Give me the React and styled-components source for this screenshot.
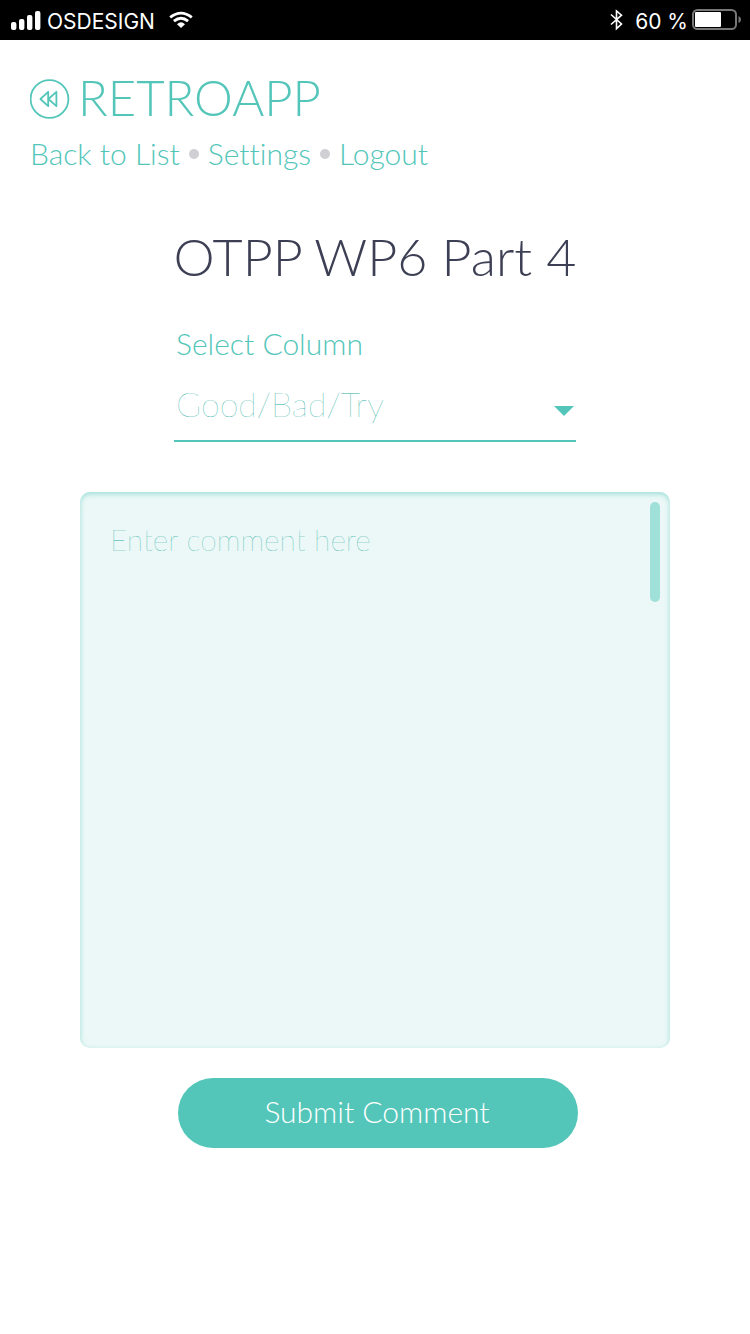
import React from "react";
import styled, { createGlobalStyle } from "styled-components";

const teal = "#53c6b9";
const deepTeal = "#2cae9f";
const ink = "#3d3f54";

const GlobalStyle = createGlobalStyle`
  *, *::before, *::after { box-sizing: border-box; }
  body {
    margin: 0;
    background: #fff;
    color: ${teal};
    font-family: Lato, "Liberation Sans", sans-serif;
    font-weight: 300;
    font-variant-ligatures: none;
  }
  button, select, textarea { font: inherit; color: inherit; }
`;

const StatusBar = styled.div`
  display: flex;
  justify-content: space-between;
  height: 40px;
  padding: 0 9px 0 11px;
  background: #000;
  color: #fff;
`;

const StatusGroup = styled.div`
  display: flex;
  align-items: center;

  svg { display: block; flex: none; }
`;

const StatusText = styled.span`
  padding: 3px ${(p) => p.$after}px 0 ${(p) => p.$before}px;
  font-family: Inter, "Liberation Sans", sans-serif;
  font-size: 21px;
  line-height: 36px;
  font-weight: 400;
`;

const Header = styled.header`
  padding: 34px 30px 0;
`;

const Brand = styled.div`
  display: flex;
  align-items: center;
  gap: 8px;
  height: 50px;

  svg { display: block; flex: none; }
`;

const BrandName = styled.span`
  padding-bottom: 4px;
  font-size: 49px;
  line-height: 46px;
`;

const Nav = styled.nav`
  display: flex;
  align-items: center;
  gap: 9px;
  height: 40px;
  margin-top: 10px;
  font-size: 30px;
  line-height: 38px;
`;

const NavLink = styled.a`
  padding-bottom: 2px;
  color: inherit;
  text-decoration: none;
`;

const Dot = styled.span`
  width: 10px;
  height: 10px;
  border-radius: 50%;
  background: #cfcfd4;
`;

const Form = styled.form`
  display: flex;
  flex-direction: column;
  align-items: center;
  padding: 0 80px 40px;
`;

const Title = styled.h1`
  margin: 50px 0 0;
  color: ${ink};
  font-size: 52px;
  line-height: 64px;
  font-weight: 300;
  white-space: nowrap;
`;

const Field = styled.div`
  width: 100%;
  max-width: 402px;
  margin-top: 35px;
`;

const Label = styled.label`
  display: block;
  padding-left: 2px;
  font-size: 30px;
  line-height: 40px;
`;

const SelectBox = styled.div`
  position: relative;
  margin-top: 8px;

  svg {
    position: absolute;
    right: 2px;
    top: 35px;
    pointer-events: none;
  }
`;

const Select = styled.select`
  display: block;
  width: 100%;
  height: 71px;
  padding: 0 30px 4px 2px;
  border: 0;
  border-bottom: 2px solid ${teal};
  border-radius: 0;
  background: transparent;
  appearance: none;
  color: ${deepTeal};
  font-size: 34px;
  font-weight: 200;
`;

const CommentBox = styled.div`
  position: relative;
  width: 100%;
  margin-top: 50px;
`;

const Comment = styled.textarea`
  display: block;
  width: 100%;
  height: 556px;
  padding: 28px 40px 28px 30px;
  border: 0;
  border-radius: 10px;
  background: #ebf8f7;
  box-shadow: inset 0 2px 5px rgba(83, 198, 185, 0.5);
  resize: none;
  font-size: 30px;
  line-height: 38px;
  font-weight: 200;

  &::placeholder { color: ${deepTeal}; opacity: 1; }
`;

const ScrollThumb = styled.span`
  position: absolute;
  top: 10px;
  right: 10px;
  width: 10px;
  height: 100px;
  border-radius: 5px;
  background: #9fe0d8;
`;

const Actions = styled.div`
  display: flex;
  justify-content: center;
  width: 100%;
  margin-top: 30px;
  padding-left: 6px;
`;

const Submit = styled.button`
  width: 100%;
  max-width: 400px;
  height: 70px;
  padding: 0 2px 4px 0;
  border: 0;
  border-radius: 35px;
  background: ${teal};
  color: #fff;
  font-size: 30px;
`;

const SignalIcon = () => (
  <svg width="30" height="20" viewBox="0 0 30 20" fill="#fff" aria-hidden="true">
    <rect x="0" y="12" width="5.4" height="8" rx="2" />
    <rect x="8" y="9" width="5.4" height="11" rx="2" />
    <rect x="16" y="5" width="5.4" height="15" rx="2" />
    <rect x="24" y="1" width="5.4" height="19" rx="2" />
  </svg>
);

const WifiIcon = () => (
  <svg width="24" height="18" viewBox="0 0 24 18" fill="none" aria-hidden="true">
    <path d="M1.2 6.4Q12-2.2 22.8 6.4" stroke="#fff" strokeWidth="2.8" />
    <path d="M4.9 10.2Q12 4.3 19.1 10.2" stroke="#fff" strokeWidth="2.8" />
    <path d="M8 13.2Q12 9.2 16 13.2L12 17Z" fill="#fff" />
  </svg>
);

const BluetoothIcon = () => (
  <svg width="13" height="22" viewBox="0 0 13 22" fill="none" aria-hidden="true">
    <path d="M1 5.5L11.5 15L6.5 19.6V1.9L11.5 6.2L1 15.5" stroke="#fff" strokeWidth="1.6" />
  </svg>
);

const BatteryIcon = () => (
  <svg width="49" height="22" viewBox="0 0 49 22" fill="none" aria-hidden="true">
    <rect x="1" y="1" width="43" height="19" rx="4.5" stroke="#777" strokeWidth="2" />
    <path d="M46.5 7Q49 8 49 10.5T46.5 14Z" fill="#777" />
    <rect x="3" y="3" width="26" height="15" rx="1" fill="#fff" />
  </svg>
);

const RewindIcon = () => (
  <svg width="40" height="40" viewBox="0 0 40 40" fill="none" stroke={teal} aria-hidden="true">
    <circle cx="19.5" cy="20" r="18.9" strokeWidth="1.8" />
    <path d="M18.2 12.8V27.2L10.4 20ZM26.4 12.8V27.2L18.4 20Z" strokeWidth="1.8" strokeLinejoin="round" />
  </svg>
);

export default function App() {
  return (
    <>
      <GlobalStyle />
      <StatusBar>
        <StatusGroup>
          <SignalIcon />
          <StatusText $before={6} $after={14}>OSDESIGN</StatusText>
          <WifiIcon />
        </StatusGroup>
        <StatusGroup>
          <BluetoothIcon />
          <StatusText $before={12} $after={4}>60 %</StatusText>
          <BatteryIcon />
        </StatusGroup>
      </StatusBar>
      <Header>
        <Brand>
          <RewindIcon />
          <BrandName>RETROAPP</BrandName>
        </Brand>
        <Nav>
          <NavLink href="#list">Back to List</NavLink>
          <Dot />
          <NavLink href="#settings">Settings</NavLink>
          <Dot />
          <NavLink href="#logout">Logout</NavLink>
        </Nav>
      </Header>
      <Form onSubmit={(e) => e.preventDefault()}>
        <Title>OTPP WP6 Part 4</Title>
        <Field>
          <Label htmlFor="column">Select Column</Label>
          <SelectBox>
            <Select id="column" defaultValue="all">
              <option value="all">Good/Bad/Try</option>
            </Select>
            <svg width="20" height="11" viewBox="0 0 20 11" fill={teal} aria-hidden="true">
              <path d="M0 0H20L10 10Z" />
            </svg>
          </SelectBox>
        </Field>
        <CommentBox>
          <Comment aria-label="Comment" placeholder="Enter comment here" />
          <ScrollThumb />
        </CommentBox>
        <Actions>
          <Submit type="submit">Submit Comment</Submit>
        </Actions>
      </Form>
    </>
  );
}
